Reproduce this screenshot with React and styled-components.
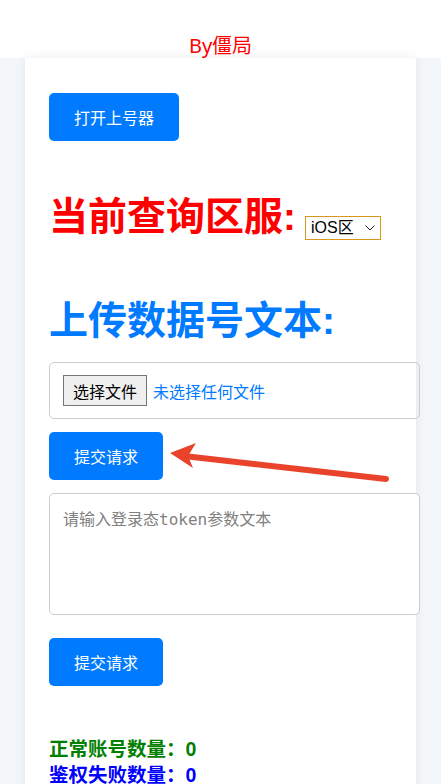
import React from "react";
import styled, { createGlobalStyle } from "styled-components";

const GlobalStyle = createGlobalStyle`
  html, body {
    margin: 0;
    padding: 0;
    background: #f4f7fa;
    font-family: "Liberation Sans", "Noto Sans CJK SC", sans-serif;
  }
  * {
    box-sizing: border-box;
  }
`;

const Page = styled.div`
  position: relative;
  min-height: 784px;
  overflow: hidden;
`;

const Header = styled.header`
  height: 58px;
  background: #fff;
  display: flex;
  align-items: flex-end;
  justify-content: center;
`;

const Author = styled.div`
  color: #ff0000;
  font-size: 20px;
  line-height: 24px;
  font-family: "Noto Sans", "Noto Sans CJK SC", sans-serif;
`;

const Card = styled.main`
  width: 391px;
  margin-left: 25px;
  background: #fff;
  box-shadow: 0 0 10px rgba(0, 0, 0, 0.08);
  padding: 35px 24px 40px;
  min-height: 760px;
`;

const Button = styled.button`
  display: block;
  height: 48px;
  padding: 0 25px;
  margin-top: ${({ $top }) => $top || 0}px;
  background: #007bff;
  color: #fff;
  border: none;
  border-radius: 5px;
  font-size: 16px;
  font-family: "Noto Sans CJK SC", sans-serif;
  cursor: pointer;
`;

const Heading = styled.h2`
  margin: ${({ $top }) => $top}px 0 0;
  font-size: 39px;
  line-height: 46px;
  font-weight: 700;
  color: ${({ $color }) => $color};
  font-family: "Liberation Sans", "Noto Sans CJK SC", sans-serif;
  white-space: nowrap;
`;

const SelectWrap = styled.span`
  position: relative;
  display: inline-block;
  margin-left: 9px;
  vertical-align: -3px;
  line-height: 0;
`;

const RegionSelect = styled.select`
  appearance: none;
  width: 76px;
  height: 24px;
  padding: 0 0 0 5px;
  font-size: 16px;
  font-weight: 400;
  font-family: "Liberation Sans", "Noto Sans CJK SC", sans-serif;
  border: 1px solid #d8961c;
  border-radius: 0;
  background: #fff;
  color: #000;
`;

const Chevron = styled.svg`
  position: absolute;
  right: 6px;
  top: 9px;
  pointer-events: none;
`;

const FileBox = styled.div`
  box-sizing: content-box;
  width: 100%;
  margin-top: 18px;
  padding: 12px 13px;
  border: 1px solid #ccc;
  border-radius: 5px;
  display: flex;
  align-items: center;
  gap: 6px;
`;

const FileButton = styled.span`
  display: inline-flex;
  align-items: center;
  height: 31px;
  padding: 0 9px;
  background: #efefef;
  border: 1px solid #767676;
  font-size: 16px;
  color: #000;
  font-family: "Noto Sans CJK SC", sans-serif;
`;

const FileName = styled.span`
  color: #007bff;
  font-size: 16px;
  font-family: "Noto Sans CJK SC", sans-serif;
`;

const TokenInput = styled.textarea`
  display: block;
  box-sizing: content-box;
  width: 100%;
  height: 94px;
  margin-top: 13px;
  padding: 15px 13px 11px;
  border: 1px solid #ccc;
  border-radius: 5px;
  resize: none;
  font-size: 16px;
  line-height: 22px;
  font-family: "DejaVu Sans Mono", "Noto Sans CJK SC", monospace;
  &::placeholder {
    color: #808080;
  }
`;

const Stats = styled.div`
  margin-top: 50px;
`;

const Stat = styled.div`
  font-size: 19.5px;
  line-height: 26px;
  font-weight: 700;
  color: ${({ $color }) => $color};
  font-family: "Liberation Sans", "Noto Sans CJK SC", sans-serif;
`;

const Overlay = styled.svg`
  position: absolute;
  left: 0;
  top: 0;
  pointer-events: none;
`;

const Arrow = () => (
  <Overlay width="441" height="784" viewBox="0 0 441 784">
    <line
      x1="386"
      y1="479"
      x2="184"
      y2="456"
      stroke="#e9432b"
      strokeWidth="6"
      strokeLinecap="round"
    />
    <polygon points="170,453 196,443 188,456 193,468" fill="#e9432b" />
  </Overlay>
);

export default function App() {
  return (
    <Page>
      <GlobalStyle />
      <Header>
        <Author>By僵局</Author>
      </Header>
      <Card>
        <Button>打开上号器</Button>
        <Heading $top={53} $color="#ff0000">
          当前查询区服:
          <SelectWrap>
            <RegionSelect defaultValue="ios">
              <option value="ios">iOS区</option>
              <option value="android">安卓区</option>
            </RegionSelect>
            <Chevron width="10" height="6" viewBox="0 0 10 6">
              <path d="M0.5 0.5 L5 5 L9.5 0.5" fill="none" stroke="#222" strokeWidth="1" />
            </Chevron>
          </SelectWrap>
        </Heading>
        <Heading $top={58} $color="#007bff">
          上传数据号文本:
        </Heading>
        <FileBox>
          <FileButton>选择文件</FileButton>
          <FileName>未选择任何文件</FileName>
        </FileBox>
        <Button $top={13}>提交请求</Button>
        <TokenInput placeholder="请输入登录态token参数文本" />
        <Button $top={23}>提交请求</Button>
        <Stats>
          <Stat $color="#008000">正常账号数量：0</Stat>
          <Stat $color="#0000ff">鉴权失败数量：0</Stat>
        </Stats>
      </Card>
      <Arrow />
    </Page>
  );
}
